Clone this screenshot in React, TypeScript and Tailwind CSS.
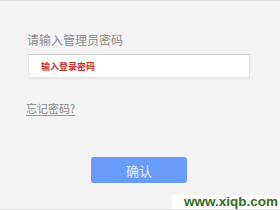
export default function App() {
  return (
    <div
      className="relative w-[280px] h-[210px] overflow-hidden bg-[#f4f4f4] border-t border-b border-[#dedede] flex flex-col"
      style={{ fontFamily: '"Noto Sans CJK SC", "Noto Sans", sans-serif' }}
    >
      <div className="pl-[27px] pt-[32px] text-[12px] leading-[14px] text-[#8c8c8c]">
        请输入管理员密码
      </div>
      <div className="ml-[28px] mt-[7px] w-[222px] h-[24px] bg-white border border-[#e4e4e4] border-t-[#d2d2d2] shadow-[0_1px_2px_rgba(0,0,0,0.06)] flex items-center pl-[12px]">
        <span className="text-[9px] leading-none font-bold text-[#c8302c]">输入登录密码</span>
      </div>
      <div className="pl-[26px] mt-[24px] text-[11px] leading-[13px]">
        <span className="text-[#8a8a8a] underline underline-offset-2 decoration-[#9a9a9a]">
          忘记密码?
        </span>
      </div>
      <div className="flex justify-center mt-[42px]">
        <button className="w-[96px] h-[26px] rounded-[3px] bg-[#699bfb] text-[13px] leading-none text-[#e6eeff] flex items-center justify-center mr-[2px]">
          确认
        </button>
      </div>
      <div
        className="absolute right-0 bottom-0 w-[108px] h-[14px] bg-white flex items-center justify-end pr-[2px] text-[13.5px] font-bold leading-none text-[#2f6b1c]"
        style={{ fontFamily: '"Liberation Sans", Arial, sans-serif' }}
      >
        www.xiqb.com
      </div>
    </div>
  );
}
